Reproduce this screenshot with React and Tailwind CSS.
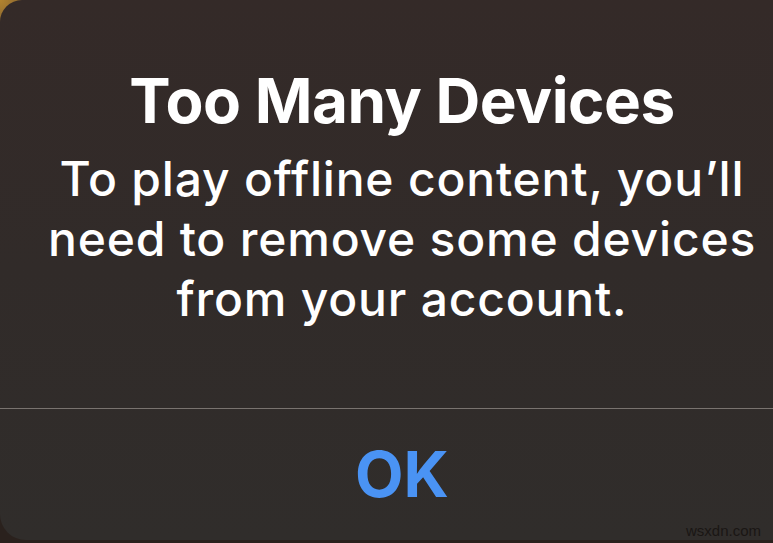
export default function App() {
  return (
    <div
      className="relative w-[773px] h-[543px] overflow-hidden bg-[#2a211d]"
      style={{ fontFamily: 'Inter, "Noto Sans", sans-serif' }}
    >
      <div className="absolute left-0 top-0 w-[40px] h-[40px] bg-[radial-gradient(circle_at_0_0,#b3842f_0%,#8a6630_40%,#33291f_100%)]" />
      <div className="relative h-[540px] rounded-tl-[22px] rounded-bl-[26px] bg-gradient-to-b from-[#342a28] via-[#312b29] to-[#302d2b] flex flex-col">
        <div className="h-[408px] flex flex-col items-center pl-[31px] pt-[70px] text-white">
          <div className="text-[62px] leading-[62px] font-bold tracking-[-0.5px] whitespace-nowrap">
            Too Many Devices
          </div>
          <div className="mt-[17px] text-[48px] leading-[60px] font-medium tracking-[0.8px] text-center whitespace-nowrap">
            <div>To play offline content, you’ll</div>
            <div>need to remove some devices</div>
            <div>from your account.</div>
          </div>
        </div>
        <div className="h-px bg-[#79736f]" />
        <div className="flex-1 flex items-center justify-center pl-[31px]">
          <span className="text-[63px] leading-[63px] font-bold text-[#4a93f4]">OK</span>
        </div>
      </div>
      <div
        className="absolute right-[12px] bottom-[5px] text-[15px] leading-[15px] text-[#1a1614]"
        style={{ fontFamily: '"Liberation Sans", Arial, sans-serif' }}
      >
        wsxdn.com
      </div>
    </div>
  );
}
